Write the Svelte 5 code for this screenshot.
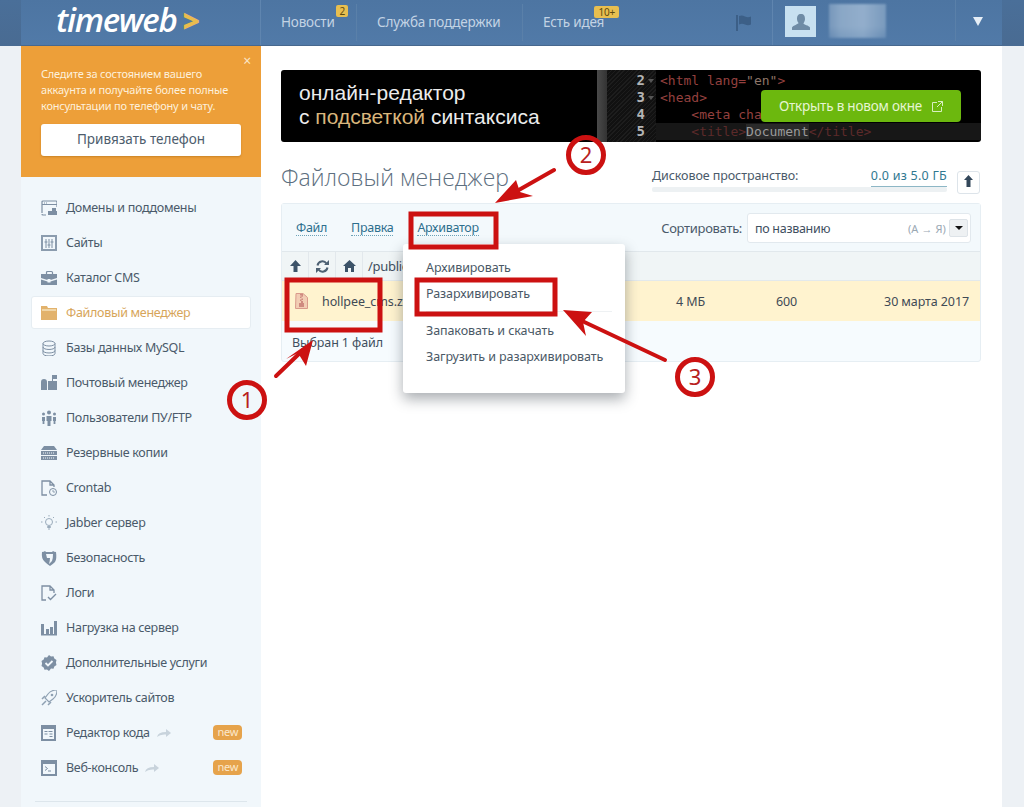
<script>
	const c = '#7d8fa3';
	const menu = [
		{ label: 'Домены и поддомены', icon: `<path d="M1 13V2q0-1 1-1h13q1 0 1 1v5M1 4.500h15M1 14q0 1 1 1h3" fill="none" stroke="${c}" stroke-width="1.2"/><path d="M3 2.500h1v1H3zM5 2.500h1v1H5zM7 11h4v4H7zM11 8h4v3h-4zM11 11h5v4h-5z" fill="${c}"/>` },
		{ label: 'Сайты', icon: `<path d="M1 1h14v14H1z" fill="none" stroke="#8b9cae" stroke-width="2"/><path d="M5 4v9M8 4v9M11 4v9M3.500 7h3M6.500 10h3M9.500 7h3" fill="none" stroke="${c}" stroke-width="1"/>` },
		{ label: 'Каталог CMS', icon: `<path d="M5.500 4V2.500q0-1 1-1h4q1 0 1 1V4" fill="none" stroke="${c}" stroke-width="1.200"/><path d="M0 4h16v4l-6.500 2v-1h-3v1L0 8zM0 9.500l6.500 2v1h3v-1l6.500-2V15H0z" fill="${c}"/>` },
		{ label: 'Файловый менеджер', icon: `<path d="M0 1h6l1 2h9v12H0z" fill="#e2b26c"/><path d="M1 4h14v2H1z" fill="#f0d6a8"/>`, active: true },
		{ label: 'Базы данных MySQL', icon: `<ellipse cx="8" cy="3.500" rx="6" ry="2.500" fill="none" stroke="${c}"/><path d="M2 3.500v10c0 3.300 12 3.300 12 0v-10M2 7c0 3.300 12 3.300 12 0M2 10.500c0 3.300 12 3.300 12 0" fill="none" stroke="${c}"/>` },
		{ label: 'Почтовый менеджер', icon: `<path d="M0 7q0-3 3-3t3 3v8H0zM7 6h4V0h5v4h-4v11H7z" fill="${c}"/><path d="M12 6h4v9h-4z" fill="${c}"/>` },
		{ label: 'Пользователи ПУ/FTP', icon: `<circle cx="8" cy="2.500" r="2" fill="${c}"/><path d="M5.500 6h5v5h-1v5h-3v-5h-1z" fill="${c}"/><circle cx="2.500" cy="4" r="1.500" fill="${c}"/><path d="M1 7h3v4H3.400v3H1.600v-3H1z" fill="${c}"/><circle cx="13.500" cy="4" r="1.500" fill="${c}"/><path d="M12 7h3v4h-.6v3h-1.800v-3H12z" fill="${c}"/>` },
		{ label: 'Резервные копии', icon: `<path d="M3 1h10l3 4H0z" fill="${c}"/><path d="M0 6h16v4H0zM0 11h16v4H0z" fill="${c}"/><path d="M2 8h12M2 13h12" stroke="#f1f7fb" stroke-dasharray="1 1"/>` },
		{ label: 'Crontab', icon: `<path d="M6 15H1V1h8l4 4v2M9 1v4h4" fill="none" stroke="${c}" stroke-width="1.300"/><circle cx="12" cy="12" r="3.500" fill="none" stroke="${c}"/><path d="M12 10v2h2" fill="none" stroke="${c}" stroke-width=".8"/>` },
		{ label: 'Jabber сервер', icon: `<circle cx="8" cy="7" r="3.500" fill="none" stroke="#9aabbb"/><path d="M6.500 11.500h3v1h-3zM7 14h2M8 0v1.500M1.500 7H0M16 7h-1.500M3 2l1 1M13 2l-1 1" stroke="#9aabbb" fill="none"/>` },
		{ label: 'Безопасность', icon: `<path d="M1 2q2 0 3-1l1 1h6l1-1q1 1 3 1 1 7-1 10-2 2-5 4-3-2-5-4Q0 9 1 2z" fill="${c}"/><path d="M5 4h7q0 5-1 7l-3 3q1-4 1-6H6z" fill="#f1f7fb"/>` },
		{ label: 'Логи', icon: `<path d="M5 15H1V1h8l4 4v3M9 1v4h4" fill="none" stroke="${c}" stroke-width="1.300"/><path d="M7 12l2.500 2.500L15 9" fill="none" stroke="${c}" stroke-width="1.400"/>` },
		{ label: 'Нагрузка на сервер', icon: `<path d="M0 4h3v10H0zM5 9h3v5H5zM9 7h3v7H9zM13 1h3v13h-3zM0 14h16v1.500H0z" fill="${c}"/>` },
		{ label: 'Дополнительные услуги', icon: `<path d="M8 0l2 1.500 2.500-.2.800 2.300 2.200 1.300-.6 2.600.6 2.600-2.200 1.300-.8 2.300-2.500-.2L8 16l-2-1.500-2.500.2-.8-2.300L.5 11.100l.6-2.600-.6-2.600 2.200-1.300.8-2.300 2.500.2z" fill="${c}"/><path d="M4.500 8l2.500 2.500L11.500 6" fill="none" stroke="#f1f7fb" stroke-width="1.800"/>` },
		{ label: 'Ускоритель сайтов', icon: `<path d="M16 0q-6 0-9 4l-3 4 4 4 4-3q4-3 4-9z" fill="none" stroke="#8fa1b3" stroke-width="1.200"/><circle cx="11" cy="5" r="1.300" fill="#8fa1b3"/><path d="M1 9l3-3M7 15l3-3M1 15l4-4" stroke="#8fa1b3" stroke-width="1.500"/>` },
		{ label: 'Редактор кода', icon: `<path d="M1 1h13v14H1z" fill="none" stroke="${c}" stroke-width="2"/><path d="M1 1h13v3H1zM3.500 6h3v1h-3zM7.500 6h4v1h-4zM3.500 8.500h3v1h-3zM8.500 8.500h3v1h-3zM8.500 11h3v1h-3z" fill="${c}"/>`, isNew: true },
		{ label: 'Веб-консоль', icon: `<path d="M1 1h14v14H1z" fill="none" stroke="${c}" stroke-width="2"/><path d="M1 1h14v3H1z" fill="${c}"/><path d="M4 6.500l2.500 2L4 10.500M7 11h3" fill="none" stroke="${c}"/>`, isNew: true }
	];
</script>

<div class="shell">
	<header class="top">
		<div class="logo"><span>timeweb</span><b>&gt;</b></div>
		<nav class="nav">
			<a class="nav-item news">Новости<i class="count">2</i></a>
			<a class="nav-item support">Служба поддержки</a>
			<a class="nav-item idea">Есть идея<i class="count wide">10+</i></a>
			<span class="flag">
				<svg width="15" height="16" viewBox="0 0 15 16"><path d="M0 0h2v16H0zM3 1q3-1 6 .5t6 0v8q-3 1.500-6 0t-6 0z" fill="#3c5f87" /></svg>
			</span>
		</nav>
		<div class="user">
			<div class="avatar">
				<svg width="18" height="18" viewBox="0 0 18 18"><path d="M9 1c3 0 4 2 4 5 0 2-1 3-1.500 4.500 0 1 5.500 2 6.500 4V17H0v-2.500c1-2 6.500-3.500 6.500-4.500C6 9 5 8 5 6c0-3 1-5 4-5z" fill="#6f8ca6" /></svg>
			</div>
			<div class="blurred"></div>
		</div>
		<div class="caret"></div>
	</header>

	<div class="body">
		<aside class="side">
			<div class="promo">
				<span class="close">×</span>
				<p>Следите за состоянием вашего аккаунта и получайте более полные консультации по телефону и чату.</p>
				<button class="bind">Привязать телефон</button>
			</div>
			<ul class="menu">
				{#each menu as item}
					<li class:active={item.active}>
						<svg class="ico" width="16" height="16" viewBox="0 0 16 16">{@html item.icon}</svg>
						<span>{item.label}</span>
						{#if item.isNew}
							<svg class="go" width="14" height="8" viewBox="0 0 14 8"><path d="M0 8q1-5 9-5V0l5 4-5 4V5.500Q3 5 0 8z" fill="#c8d3dc" /></svg>
							<em>new</em>
						{/if}
					</li>
				{/each}
			</ul>
			<div class="side-line"></div>
		</aside>

		<main class="main">
			<section class="banner">
				<div class="slogan">
					<div>онлайн-редактор</div>
					<div>с <span>подсветкой</span> синтаксиса</div>
				</div>
				<div class="gutter-bar"></div>
				<div class="gutter">
					<div>2<i></i></div>
					<div>3<i></i></div>
					<div>4<i class="none"></i></div>
					<div>5<i class="none"></i></div>
				</div>
				<div class="code">
					<div>&lt;html lang=<u>"en"</u>&gt;</div>
					<div>&lt;head&gt;</div>
					<div>&nbsp;&nbsp;&nbsp;&nbsp;&lt;meta charset</div>
					<div class="cur">&nbsp;&nbsp;&nbsp;&nbsp;&lt;title&gt;<span>Document</span>&lt;/title&gt;</div>
				</div>
				<a class="open">Открыть в новом окне
					<svg width="11" height="11" viewBox="0 0 11 11"><path d="M5 1.500H.5v9h9V6M6 .5h4.500V5M10.500.5L5 6" fill="none" stroke="#d8efc0" /></svg>
				</a>
			</section>

			<div class="head">
				<h1>Файловый менеджер</h1>
				<div class="disk">
					<div class="disk-row">
						<span>Дисковое пространство:</span>
						<a>0.0 из 5.0 ГБ</a>
					</div>
					<div class="disk-bar"></div>
				</div>
				<button class="upload">
					<svg width="9" height="12" viewBox="0 0 9 12"><path d="M4.500 0L9 5H6.500v7h-4V5H0z" fill="#33475a" /></svg>
				</button>
			</div>

			<section class="panel">
				<div class="tools">
					<a>Файл</a>
					<a>Правка</a>
					<a>Архиватор</a>
					<span class="sort-label">Сортировать:</span>
					<div class="sort">
						<span>по названию</span>
						<small>(А → Я)</small>
						<i></i>
					</div>
				</div>
				<div class="path">
					<span class="cell"><svg width="11" height="12" viewBox="0 0 11 12"><path d="M5.500 0L11 6H7.500v6h-4V6H0z" fill="#3c5368" /></svg></span>
					<span class="cell"><svg width="13" height="13" viewBox="0 0 13 13"><path d="M1.500 5.500A5 5 0 0 1 10.500 3.500M11.500 7.500A5 5 0 0 1 2.500 9.500" fill="none" stroke="#4d6173" stroke-width="2" /><path d="M8 5h5V0zM5 8H0v5z" fill="#4d6173" /></svg></span>
					<span class="cell"><svg width="13" height="12" viewBox="0 0 13 12"><path d="M6.500 0L13 6h-2v6H8V8H5v4H2V6H0z" fill="#3c5368" /></svg></span>
					<span class="crumb">/public_html/</span>
				</div>
				<div class="file">
					<svg width="13" height="16" viewBox="0 0 13 16"><path d="M1 .5h7l4.500 4v11H.500z" fill="#f2cdb4" stroke="#d99a8c" /><path d="M5 1h3v2.500L6.500 4v1.500H8V7H6.500v1H8v2h1v4H4v-4h2V8H5V6.500h1.500V5H5V3.500h1.500V2.500H5z" fill="#cf8a80" /></svg>
					<span class="name">hollpee_cms.zip</span>
					<span class="size">4 МБ</span>
					<span class="perm">600</span>
					<span class="date">30 марта 2017</span>
				</div>
				<div class="status">Выбран 1 файл</div>
			</section>
		</main>
	</div>

	<div class="drop">
		<div>Архивировать</div>
		<div>Разархивировать</div>
		<hr />
		<div>Запаковать и скачать</div>
		<div>Загрузить и разархивировать</div>
	</div>
</div>

<svg class="marks" width="1024" height="807" viewBox="0 0 1024 807">
	<g fill="none" stroke="#cc1111" stroke-width="5">
		<rect x="287" y="280" width="93" height="50" />
		<rect x="411" y="214" width="85" height="33" />
		<rect x="417" y="280" width="138" height="34" />
		<circle cx="247" cy="400" r="17.500" />
		<circle cx="586" cy="155" r="17.500" />
		<circle cx="695" cy="377" r="17.500" />
	</g>
	<g stroke="#cc1111" stroke-width="4" stroke-linecap="round">
		<path d="M276 376L303 350" />
		<path d="M554 170L510 195" />
		<path d="M665 360L580 320" />
	</g>
	<g fill="#cc1111">
		<path d="M313 340L306 366L298 353L286 359z" />
		<path d="M495 203L516 180L520 192L533 196z" />
		<path d="M563 310L592 312L583 322L586 336z" />
	</g>
	<g class="nums" fill="#b82020" text-anchor="middle">
		<text x="247" y="408">1</text>
		<text x="586" y="163">2</text>
		<text x="695" y="385">3</text>
	</g>
</svg>

<style>
	:global(body) {
		margin: 0;
		height: 807px;
		overflow: hidden;
		background: linear-gradient(to bottom, #4a6f99 0, #496b92 46px, #edf1f5 46px);
		font-family: "Noto Sans", "Open Sans", sans-serif;
		font-size: 12.500px;
		letter-spacing: -.3px;
		color: #4a5a6a;
	}

	.shell {
		position: relative;
		width: 981px;
		margin-left: 21px;
		height: 807px;
		background: #fff;
	}

	.top {
		display: flex;
		height: 46px;
		background: linear-gradient(#4d75a2, #517aa8);
		border-bottom: 1px solid #47688e;
		box-sizing: border-box;
	}

	.logo {
		width: 240px;
		box-sizing: border-box;
		padding: 0 0 0 35px;
		line-height: 40px;
		font-family: "Open Sans", sans-serif;
		font-style: italic;
		font-weight: 600;
		font-size: 33px;
		letter-spacing: -1.300px;
		color: #fff;
		border-right: 1px solid #5f85af;
	}

	.logo b {
		color: #e9bc4f;
		font-style: normal;
		font-weight: 800;
		font-size: 30px;
		margin-left: 6px;
	}

	.nav {
		display: flex;
		width: 511px;
		border-right: 1px solid #5f85af;
		color: #c3d3e4;
		font-size: 13.500px;
		letter-spacing: -.2px;
	}

	.nav-item {
		position: relative;
		padding: 0 21px 0 20px;
		border-right: 1px solid #5a80a9;
		margin: 4px 0;
		line-height: 36px;
		white-space: nowrap;
	}

	.nav-item.news {
		width: 54px;
	}

	.nav-item.support {
		width: 124px;
	}

	.nav-item.idea {
		border-right: 0;
		width: 62px;
	}

	.count {
		position: absolute;
		top: 1px;
		right: 8px;
		padding: 0 3px;
		height: 12px;
		line-height: 12px;
		font-size: 10px;
		font-style: normal;
		color: #5c4a10;
		background: #e8bf50;
		border-radius: 2px;
	}

	.count.wide {
		right: 7px;
		top: 2px;
		padding: 0 4px;
	}

	.flag {
		display: block;
		margin: 15px 0 0 110px;
	}

	.user {
		display: flex;
		flex: 1;
		padding: 6px 0 0 12px;
		gap: 13px;
		border-right: 1px solid #5a80a9;
		margin-bottom: 4px;
	}

	.avatar {
		display: flex;
		align-items: center;
		justify-content: center;
		width: 31px;
		height: 31px;
		background: #c7e0f0;
	}

	.blurred {
		width: 57px;
		height: 34px;
		margin-top: -2px;
		background: linear-gradient(180deg, rgba(255,255,255,.16) 0 65%, rgba(255,255,255,.05)), linear-gradient(90deg, #5d83ae, #7396bb 20%, #7e9fc2 60%, #5f86b0);
		filter: blur(1px);
	}

	.caret {
		width: 46px;
		position: relative;
	}

	.caret::after {
		content: "";
		position: absolute;
		left: 17px;
		top: 17px;
		border: 5px solid transparent;
		border-top: 9px solid #e6eef6;
		border-bottom: 0;
	}

	.body {
		display: flex;
	}

	.side {
		width: 240px;
		height: 761px;
		background: #f1f7fb;
		flex: none;
	}

	.promo {
		position: relative;
		height: 131px;
		padding: 20px 20px 0;
		box-sizing: border-box;
		background: #ed9f39;
		color: #fdf0dc;
	}

	.promo p {
		margin: 0 0 10px;
		font-size: 11px;
		line-height: 16px;
		letter-spacing: -.2px;
	}

	.close {
		position: absolute;
		right: 10px;
		top: 7px;
		font-size: 14px;
		line-height: 16px;
		color: #fbe5c6;
	}

	.bind {
		display: block;
		width: 200px;
		height: 32px;
		padding: 0 0 3px;
		border: 0;
		border-radius: 3px;
		background: #fff;
		box-shadow: 0 1px 2px rgba(150, 90, 10, .4);
		font: inherit;
		font-size: 13.500px;
		color: #4d5d6d;
	}

	.menu {
		list-style: none;
		margin: 0;
		padding: 14px 10px 0;
	}

	.menu li {
		display: flex;
		align-items: center;
		height: 33px;
		margin-bottom: 2px;
		padding: 0 8px 0 10px;
		border-radius: 3px;
		border: 1px solid transparent;
		box-sizing: border-box;
	}

	.menu li.active {
		background: #fff;
		border-color: #e6edf2;
		color: #d7a55a;
	}

	.ico {
		flex: none;
		margin-right: 9px;
		margin-left: -1px;
	}

	.go {
		margin-left: 7px;
	}

	.menu em {
		margin-left: auto;
		padding: 0 4px;
		height: 15px;
		line-height: 14px;
		font-size: 11px;
		font-style: normal;
		color: #fbe8cc;
		background: #e6a34b;
		border-radius: 4px;
	}

	.side-line {
		height: 1px;
		margin: 17px 14px 0;
		background: #dde6ec;
	}

	.main {
		flex: 1;
		padding: 24px 21px 0 20px;
		min-width: 0;
	}

	.banner {
		display: flex;
		position: relative;
		height: 72px;
		background: #000;
		border-radius: 3px;
		overflow: hidden;
	}

	.slogan {
		padding: 11px 0 0 18px;
		width: 298px;
		font-family: "Liberation Sans", Arial, sans-serif;
		font-size: 21px;
		line-height: 24px;
		letter-spacing: 0;
		color: #ececec;
	}

	.slogan span {
		color: #d9b67c;
	}

	.gutter-bar {
		width: 10px;
		background: linear-gradient(90deg, #4a4a4a, #333);
	}

	.gutter {
		width: 49px;
		box-sizing: border-box;
		padding-right: 2px;
		text-align: right;
		background: repeating-linear-gradient(135deg, #1d1d1d 0 1px, #111 1px 3px);
		font-family: "DejaVu Sans Mono", monospace;
		font-weight: 700;
		font-size: 14px;
		line-height: 17px;
		letter-spacing: 0;
		color: #b4b4b4;
	}

	.gutter i {
		display: inline-block;
		width: 0;
		height: 0;
		margin: 0 0 2px 3px;
		border: 3px solid transparent;
		border-top: 4px solid #555;
		border-bottom: 0;
	}

	.gutter i.none {
		border-top-color: transparent;
	}

	.code {
		flex: 1;
		padding-left: 4px;
		font-family: "DejaVu Sans Mono", monospace;
		font-size: 13px;
		line-height: 17px;
		letter-spacing: 0;
		color: #94403f;
		white-space: nowrap;
	}

	.code u {
		text-decoration: none;
		color: #8d7568;
	}

	.gutter div:first-child,
	.code div:first-child {
		margin-top: 2px;
	}

	.cur {
		background: #171717;
		color: #5c2a2a;
		margin-left: -4px;
		padding-left: 4px;
	}

	.cur span {
		color: #9a9a9a;
		background: #2a2a2a;
	}

	.open {
		position: absolute;
		left: 480px;
		top: 20px;
		display: flex;
		align-items: center;
		justify-content: center;
		gap: 10px;
		width: 200px;
		height: 32px;
		border-radius: 4px;
		background: #6cb80e;
		font-size: 13.500px;
		letter-spacing: -.2px;
		color: #e6f5d2;
	}

	.head {
		display: flex;
		align-items: flex-start;
		height: 61px;
	}

	h1 {
		margin: 20px 0 0;
		width: 371px;
		font-weight: 300;
		font-size: 23px;
		line-height: 30px;
		letter-spacing: 0;
		color: #5d6f80;
		font-family: "Open Sans", sans-serif;
	}

	.disk {
		width: 295px;
		margin-top: 25px;
	}

	.disk-row {
		display: flex;
		justify-content: space-between;
		line-height: 18px;
		height: 20px;
		letter-spacing: -.08px;
	}

	.disk-row a {
		color: #2f7891;
		border-bottom: 1px solid #8db7c6;
		letter-spacing: .25px;
	}

	.disk-bar {
		height: 5px;
		margin-top: 0;
		background: #edf1f3;
		border-radius: 2px;
	}

	.upload {
		width: 23px;
		height: 23px;
		margin: 29px 0 0 10px;
		padding: 0;
		border: 1px solid #dde4ea;
		border-radius: 3px;
		background: #fff;
	}

	.panel {
		border: 1px solid #e6eef3;
		border-radius: 3px;
		background: #f6fbfe;
		height: 159px;
		box-sizing: border-box;
	}

	.tools {
		display: flex;
		align-items: center;
		height: 47px;
		padding-left: 14px;
		background: #f3f9fc;
		border-bottom: 1px solid #e1e8ec;
	}

	.tools a {
		margin-right: 24px;
		color: #2d6f8e;
		border-bottom: 1px dotted #6da3b8;
		line-height: 15px;
	}

	.sort-label {
		margin-left: auto;
		margin-right: 5px;
		font-size: 13px;
	}

	.sort {
		display: flex;
		align-items: center;
		width: 224px;
		height: 30px;
		margin-right: 9px;
		padding: 1px 2px 0 7px;
		box-sizing: border-box;
		background: #fff;
		border: 1px solid #e2e9ee;
		border-radius: 3px;
		color: #3f4f5f;
	}

	.sort small {
		margin-left: auto;
		margin-right: 3px;
		font-size: 11px;
		letter-spacing: .1px;
		color: #9aa8b4;
	}

	.sort i {
		position: relative;
		width: 19px;
		height: 18px;
		background: #eef1f3;
		border: 1px solid #dde3e8;
		border-radius: 2px;
		box-sizing: border-box;
	}

	.sort i::after {
		content: "";
		position: absolute;
		left: 5px;
		top: 6px;
		border: 4px solid transparent;
		border-top: 4px solid #111;
		border-bottom: 0;
	}

	.path {
		display: flex;
		align-items: center;
		height: 28px;
		background: #f0f5f6;
		border-bottom: 1px solid #e3e9ec;
	}

	.cell {
		display: flex;
		align-items: center;
		justify-content: center;
		width: 26px;
		height: 28px;
		border-right: 1px solid #e2e8ec;
		box-sizing: content-box;
	}

	.crumb {
		margin-left: 5px;
		color: #3f4f5f;
		font-size: 13px;
	}

	.file {
		display: flex;
		align-items: center;
		height: 40px;
		padding: 0 11px 0 13px;
		background: #fff3cf;
		color: #3f4a55;
		letter-spacing: -.1px;
	}

	.name {
		width: 354px;
		margin-left: 14px;
	}

	.size {
		width: 100px;
	}

	.perm {
		flex: 1;
	}

	.status {
		padding: 13px 0 0 10px;
		line-height: 18px;
		color: #3f4f5f;
		letter-spacing: -.1px;
	}

	.drop {
		position: absolute;
		left: 382px;
		top: 244px;
		width: 222px;
		height: 149px;
		padding: 11px 0 0 23px;
		box-sizing: border-box;
		background: #fff;
		border-radius: 3px;
		box-shadow: 0 6px 14px rgba(40, 50, 60, .4);
		color: #4a5866;
		letter-spacing: -.08px;
	}

	.drop div {
		line-height: 26px;
	}

	.drop hr {
		margin: 4px 13px 6px 0;
		border: 0;
		border-top: 1px solid #eef1f3;
	}

	.marks {
		position: absolute;
		left: 0;
		top: 0;
		pointer-events: none;
		letter-spacing: 0;
	}

	.nums {
		font-family: "Noto Sans", sans-serif;
		font-size: 22px;
	}
</style>
